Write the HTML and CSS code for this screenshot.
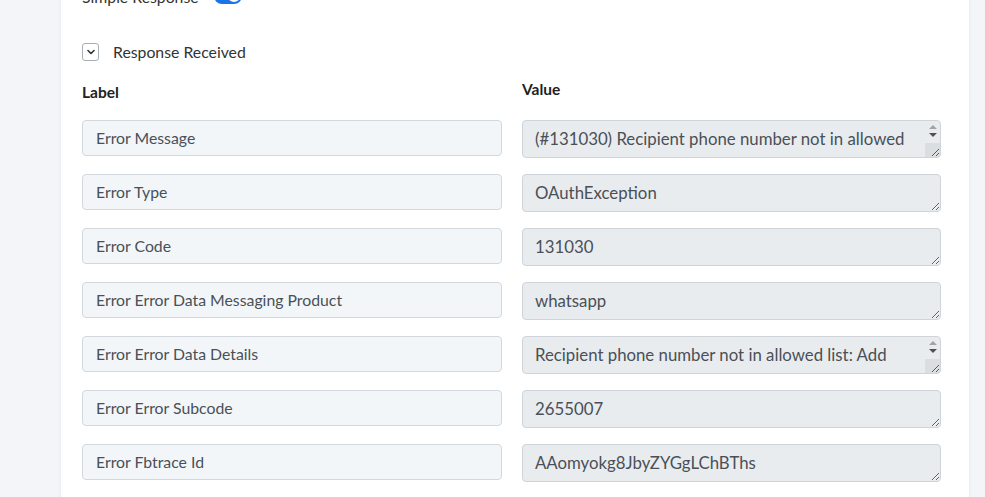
FILE: index.html
```html
<!DOCTYPE html>
<html lang="en">
<head>
    <meta charset="UTF-8">
    <meta name="viewport" content="width=device-width, initial-scale=1.0">
    <title>Response Received</title>
    <link rel="stylesheet" href="styles.css">
</head>
<body>

    <div class="panel">
        <div class="toggle-row">
            <span class="toggle-label">Simple Response</span>
            <span class="switch"><span class="knob"></span></span>
        </div>

        <div class="section-head">
            <span class="chevron">
                <svg width="10" height="10" viewBox="0 0 10 10"><path d="M2 3.5 L5 6.5 L8 3.5" fill="none" stroke="#333" stroke-width="1.6" stroke-linecap="round" stroke-linejoin="round"/></svg>
            </span>
            <span class="section-title">Response Received</span>
        </div>

        <div class="fields">
            <div class="col-head head-label">Label</div>
            <div class="col-head head-value">Value</div>

            <input class="field-label" type="text" value="Error Message" readonly>
            <div class="value-wrap scrolling">
                <textarea class="field-value" readonly>(#131030) Recipient phone number not in allowed list</textarea>
                <span class="scrollbar"><span class="arrow-up"></span><span class="arrow-down"></span><span class="corner"></span></span>
            </div>

            <input class="field-label" type="text" value="Error Type" readonly>
            <div class="value-wrap">
                <textarea class="field-value" readonly>OAuthException</textarea>
            </div>

            <input class="field-label" type="text" value="Error Code" readonly>
            <div class="value-wrap">
                <textarea class="field-value" readonly>131030</textarea>
            </div>

            <input class="field-label" type="text" value="Error Error Data Messaging Product" readonly>
            <div class="value-wrap">
                <textarea class="field-value" readonly>whatsapp</textarea>
            </div>

            <input class="field-label" type="text" value="Error Error Data Details" readonly>
            <div class="value-wrap scrolling">
                <textarea class="field-value" readonly>Recipient phone number not in allowed list: Add recipient phone number to recipient list and try again.</textarea>
                <span class="scrollbar"><span class="arrow-up"></span><span class="arrow-down"></span><span class="corner"></span></span>
            </div>

            <input class="field-label" type="text" value="Error Error Subcode" readonly>
            <div class="value-wrap">
                <textarea class="field-value" readonly>2655007</textarea>
            </div>

            <input class="field-label" type="text" value="Error Fbtrace Id" readonly>
            <div class="value-wrap">
                <textarea class="field-value" readonly>AAomyokg8JbyZYGgLChBThs</textarea>
            </div>
        </div>
    </div>

</body>
</html>
```

FILE: styles.css
```css
body {
    font-family: Lato, "Open Sans", sans-serif;
    margin: 0;
    padding: 0 16px 0 61px;
    background-color: #f3f5f9;
    color: #333;
    overflow: hidden;
}
.panel {
    background-color: white;
    box-shadow: 0px 0px 4px rgba(0, 0, 0, 0.06);
    padding: 0 29px 40px 21px;
    margin-top: -14px;
}
.toggle-row {
    display: flex;
    align-items: center;
    gap: 15px;
    height: 20px;
}
.toggle-label {
    font-size: 15.8px;
    color: #333;
}
.switch {
    width: 28px;
    height: 16px;
    border-radius: 8px;
    background-color: #1a73e8;
    position: relative;
}
.switch .knob {
    position: absolute;
    right: 2px;
    top: 2px;
    width: 12px;
    height: 12px;
    border-radius: 50%;
    background-color: white;
}
.section-head {
    display: flex;
    align-items: center;
    gap: 14px;
    margin-top: 37px;
}
.chevron {
    width: 15px;
    height: 16px;
    border: 1px solid #a8aeb6;
    border-radius: 3px;
    display: flex;
    justify-content: center;
    align-items: center;
}
.section-title {
    font-size: 15.8px;
    color: #333;
    margin-top: -1px;
}
.fields {
    display: grid;
    grid-template-columns: 420px 419px;
    column-gap: 20px;
    row-gap: 16px;
    margin-top: 22px;
    align-items: start;
}
.col-head {
    font-size: 15.5px;
    font-weight: bold;
    color: #222;
    margin-bottom: 3px;
}
.head-value {
    margin-top: -3px;
}
.field-label,
.field-value {
    box-sizing: border-box;
    margin: 0;
    font-family: Lato, "Open Sans", sans-serif;
    color: #495057;
    border-radius: 4px;
}
.field-label {
    height: 36px;
    padding: 0 13px 1px;
    font-size: 15.8px;
    background-color: #f3f6f9;
    border: 1px solid #d3d8de;
    outline: none;
}
.value-wrap {
    position: relative;
    height: 38px;
}
.field-value {
    display: block;
    width: 100%;
    height: 38px;
    padding: 5px 12px;
    font-size: 16.8px;
    line-height: 25px;
    background-color: #e9ecef;
    border: 1px solid #ced4da;
    resize: vertical;
    overflow: hidden;
}
.scrolling .field-value {
    padding-right: 28px;
}

/* classic scrollbar shown on values that overflow */
.scrollbar {
    position: absolute;
    top: 1px;
    right: 1px;
    bottom: 1px;
    width: 15px;
    display: flex;
    flex-direction: column;
    align-items: center;
    pointer-events: none;
    border-radius: 0 3px 3px 0;
    overflow: hidden;
}
.arrow-up,
.arrow-down {
    width: 0;
    height: 0;
    border-left: 4px solid transparent;
    border-right: 4px solid transparent;
    margin-top: 4px;
}
.arrow-up {
    border-bottom: 4px solid #a3a3a3;
}
.arrow-down {
    border-top: 4px solid #505050;
    margin-top: 4px;
}
.corner {
    margin-top: auto;
    width: 100%;
    height: 14px;
    background-color: rgba(0, 0, 0, 0.06);
}
```
